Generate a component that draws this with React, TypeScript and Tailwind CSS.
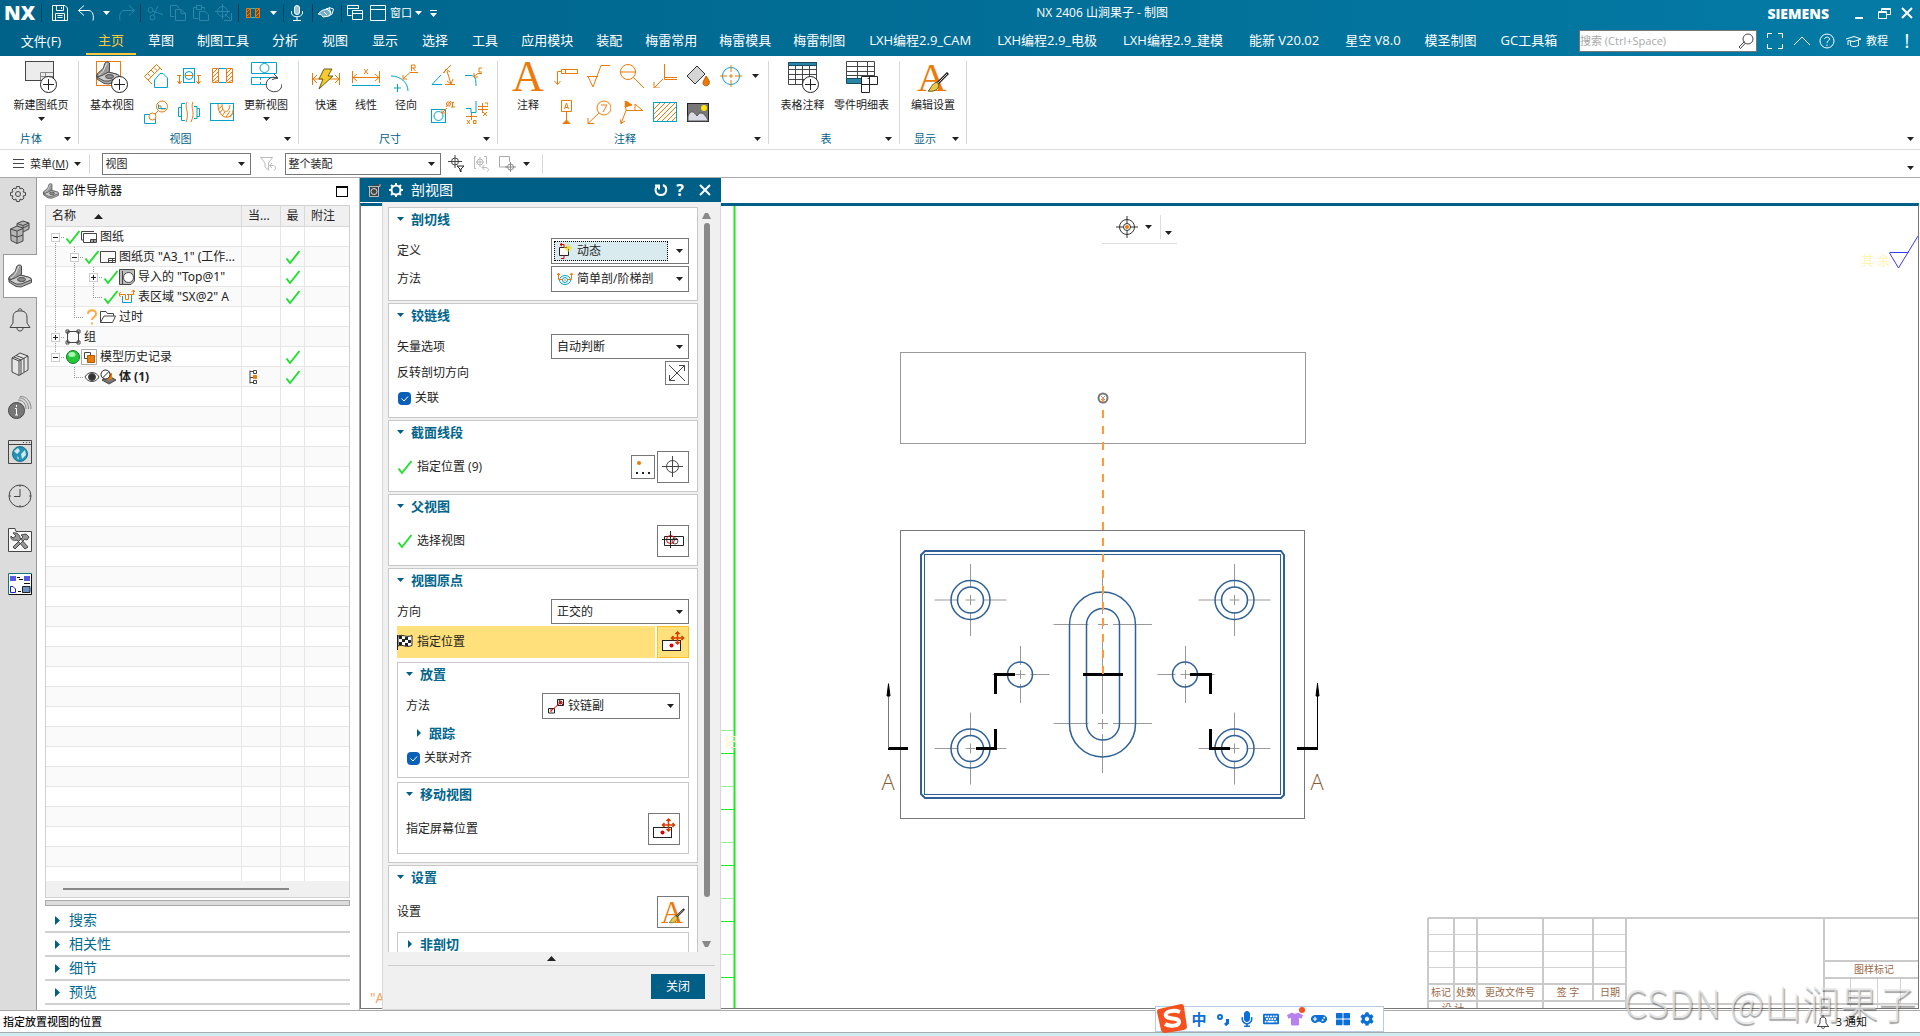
import type { ReactNode } from 'react'
import { FaCog, FaGamepad, FaKeyboard, FaMicrophone, FaThLarge, FaTshirt } from 'react-icons/fa'

const O = '#ec7a08'
const C = '#00a3cc'
const K = '#464646'

type IconProps = {
  size?: number
  color?: string
  width?: number
  children: ReactNode
}

function Icon({ size = 24, color = K, width = 1, children }: IconProps) {
  return (
    <svg
      width={size}
      height={size}
      viewBox={`0 0 ${size} ${size}`}
      fill="none"
      stroke={color}
      strokeWidth={width}
      className="shrink-0"
      aria-hidden="true"
    >
      {children}
    </svg>
  )
}

function Caret({ className = 'text-[#222]' }: { className?: string }) {
  return (
    <svg width="7" height="4" viewBox="0 0 7 4" className={`pointer-events-none shrink-0 ${className}`} aria-hidden="true">
      <path d="M0 0H7L3.5 4Z" fill="currentColor" />
    </svg>
  )
}

function PlusBadge() {
  return (
    <>
      <circle cx="23.5" cy="23.5" r="8" fill="#fff" stroke="#222" />
      <path d="M23.5 18V29M18 23.5H29" stroke="#222" />
    </>
  )
}

function BracketShape() {
  return (
    <g stroke="#4a4a4a" strokeLinejoin="round">
      <path d="M1 14L12 11L20 13C23 14 24 15 23.5 17V18.5L13 23L8 22.5L1 18Z" fill="#a9a9a9" />
      <path d="M1 14L12 11L20 13C23 14 24 15 23 16L13 20L8 20L1 16Z" fill="#cfcfcf" />
      <ellipse cx="13.5" cy="15.5" rx="4" ry="2" fill="#8c8c8c" />
      <path d="M1 15V13C3 11 6 9 7.5 7L8.5 3C9.5 .5 12.5 .5 13.5 2V10.5L6 14.5L1 16Z" fill="#9a9a9a" />
      <path d="M3 14C6 12 8.5 9 9 6L11 2" stroke="#e2e2e2" />
    </g>
  )
}

function SectionGlyph() {
  return (
    <>
      <path d="M.5 4.5H6.5V18.5H.5ZM14.5 4.5H20.5V18.5H14.5Z" stroke={O} />
      <path d="M1 9L5 5M1 13L6 8M1 17L6 12M3 18L6 16M15 9L19 5M15 13L20 8M15 17L20 12M17 18L20 16" stroke={O} />
      <path d="M7 4.5H14M7 18.5H14" stroke={C} />
    </>
  )
}

function LetterBrush() {
  return (
    <>
      <text x="0" y="30" fontSize="41" fill={O} stroke="none" className="font-['Liberation_Serif',serif]">
        A
      </text>
      <path d="M31 12L20 23" stroke="#222" strokeWidth="3" />
      <path d="M30 13L20 23" stroke="#ccc" strokeWidth="1" />
      <path d="M20 21L22 24C21 29 17 31 11 30C14 28 14 23 20 21Z" fill="#e8c84a" stroke="#6d5b16" />
    </>
  )
}

function CheckMark() {
  return (
    <Icon size={16} color="#22e032" width={2}>
      <path d="M1.5 9.5L5 14L14.5 2" />
    </Icon>
  )
}

/* title bar */

const Divider = () => <span className="h-[18px] w-px bg-[#003f5c]" />

function TitleBar() {
  return (
    <header className="flex h-[26px] items-center text-white">
      <strong className="w-[41px] pl-1 text-[20px] leading-6 font-extrabold">NX</strong>
      <Divider />
      <div className="flex items-center gap-2 pr-1 pl-[9px]">
        <button aria-label="保存">
          <Icon size={18} color="#fff">
            <path d="M1.5 1.5H14L16.5 4V16.5H1.5ZM5.5 1.5V6.5H12.5V1.5M4.5 16.5V9.5H13.5V16.5M6.5 11.5H11.5M6.5 13.5H11.5M10.5 3V5" />
          </Icon>
        </button>
        <button aria-label="撤消" className="flex items-center gap-2">
          <Icon size={18} color="#fff">
            <path d="M7 1.5L1.5 6.5L7 11.5M1.5 6.5H12C16 7 17 12 16 16.5" />
          </Icon>
          <Caret className="text-white" />
        </button>
        <button aria-label="重做">
          <Icon size={18} color="#2e86a8">
            <path d="M11 1.5L16.5 6.5L11 11.5M16.5 6.5H6C2 7 1 12 2 16.5" />
          </Icon>
        </button>
      </div>
      <Divider />
      <div className="flex items-center gap-[5px] px-[5px]">
        <button aria-label="剪切">
          <Icon size={18} color="#2e86a8">
            <circle cx="4.5" cy="6" r="2.5" />
            <circle cx="6.5" cy="13.5" r="2.5" />
            <path d="M6.5 7L17 10.5M7.5 11.5L12 2" />
          </Icon>
        </button>
        <button aria-label="复制">
          <Icon size={18} color="#2e86a8">
            <path d="M5.5 12.5H1.5V1.5H8L10.5 4.5M6.5 5.5H12L16.5 9.5V16.5H6.5ZM12 5.5V9.5H16.5" />
          </Icon>
        </button>
        <button aria-label="粘贴">
          <Icon size={18} color="#2e86a8">
            <path d="M6.5 14.5H1.5V3.5H4.5M9.5 3.5H12.5V5.5M4.5 1.5H9.5V5.5H4.5ZM7.5 7.5H13L16.5 10.5V16.5H7.5Z" />
          </Icon>
        </button>
        <button aria-label="粘贴特殊">
          <Icon size={18} color="#2e86a8">
            <circle cx="7.5" cy="7.5" r="5" />
            <path d="M7.5 0V15M0 7.5H15M9 16.5H16.5V9M10 10L15 15" />
          </Icon>
        </button>
      </div>
      <Divider />
      <button aria-label="剖视图" className="flex items-center gap-1.5 pr-1.5 pl-[3px]">
        <Icon size={22}>
          <path d="M4.5 6.5H8.5V15.5H4.5ZM13.5 6.5H17.5V15.5H13.5Z" stroke={O} fill="#7d4f1c" />
          <path d="M5 10L8 7M5 14L8 11M14 10L17 7M14 14L17 11" stroke={O} />
          <path d="M9 6.5H13M9 15.5H13" stroke="#19c3ee" />
        </Icon>
        <Caret className="text-white" />
      </button>
      <Divider />
      <button aria-label="语音" className="pr-1.5 pl-1">
        <Icon size={18} color="#fff">
          <rect x="6.5" y="1.5" width="5" height="9" rx="2.5" fill="#9bc5d6" />
          <path d="M3.5 7V9C4 14 14 14 14.5 9V7M9 13V16.5M5 16.5H13" />
        </Icon>
      </button>
      <Divider />
      <button aria-label="触控" className="pr-1.5 pl-1">
        <Icon size={18} color="#fff">
          <path d="M1 10L5 6.5L10 5L14 9L12 12L6 13L4 10.5ZM9 5L12 4L14 9" fill="#75aec4" />
          <path d="M12 3.5L16.5 5L15 10L12 12M7 8L10 11" />
        </Icon>
      </button>
      <Divider />
      <button aria-label="切换窗口" className="pl-1">
        <Icon size={18} color="#fff">
          <path d="M5.5 11.5H1.5V1.5H12.5V5M1.5 4.5H12.5M6.5 6.5H16.5V15.5H6.5ZM6.5 9.5H16.5" />
        </Icon>
      </button>
      <button className="flex items-center gap-[3px] pl-[5px] text-[11px] leading-4">
        <Icon size={18} color="#fff">
          <path d="M1.5 1.5H16.5V16.5H1.5ZM1.5 5.5H16.5" />
        </Icon>
        窗口
        <Caret className="text-white" />
      </button>
      <button aria-label="自定义快速访问" className="flex flex-col items-center gap-0.5 pl-2">
        <span className="h-px w-[7px] bg-white" />
        <Caret className="text-white" />
      </button>
      <h1 className="flex-1 text-center text-[12px] leading-4 font-normal">NX 2406 山涧果子 - 制图</h1>
      <strong className="pt-0.5 text-[14px] leading-4 font-extrabold">SIEMENS</strong>
      <div className="flex items-center gap-[7px] pr-1 pl-[22px]">
        <button aria-label="最小化">
          <Icon size={17} color="#fff" width={2}>
            <path d="M4 13H12" />
          </Icon>
        </button>
        <button aria-label="还原">
          <Icon size={17} color="#fff">
            <path d="M6.5 6V3.5H15.5V9.5H12M3.5 6.5H11.5V13.5H3.5ZM3.5 7.5H11.5M6.5 4.5H15.5" />
          </Icon>
        </button>
        <button aria-label="关闭窗口">
          <Icon size={17} color="#fff" width={2}>
            <path d="M3 3L13 13M13 3L3 13" />
          </Icon>
        </button>
      </div>
    </header>
  )
}

/* menu tabs */

const tabs = [
  '主页', '草图', '制图工具', '分析', '视图', '显示', '选择', '工具', '应用模块', '装配',
  '梅雷常用', '梅雷模具', '梅雷制图', 'LXH编程2.9_CAM', 'LXH编程2.9_电极', 'LXH编程2.9_建模',
  '能新 V20.02', '星空 V8.0', '模圣制图', 'GC工具箱',
]

function tabPadding(tab: string) {
  if (tab.length > 4) return 'px-[13px]'
  return tab.length === 4 ? 'px-[11px]' : 'px-3'
}

function MenuBar() {
  return (
    <nav className="flex h-[30px] items-center text-[13px] text-white">
      <button className="w-[86px] shrink-0 pr-1 leading-6">文件(F)</button>
      {tabs.map((tab, i) => (
        <button
          key={tab}
          className={`h-7 shrink-0 border-b-2 leading-6 whitespace-nowrap ${tabPadding(tab)} ${
            i === 0 ? 'border-[#ffc93c] text-[#ffc93c]' : 'border-transparent'
          }`}
        >
          {tab}
        </button>
      ))}
      <div className="ml-auto flex items-center gap-2 pr-[7px]">
        <label className="flex h-[22px] w-[178px] items-center border border-[#777] bg-white pr-px">
          <input
            type="text"
            aria-label="搜索"
            placeholder="搜索 (Ctrl+Space)"
            className="w-full min-w-0 text-[11px] text-[#333] outline-none placeholder:text-[#a8a8a8]"
          />
          <Icon size={18}>
            <circle cx="11" cy="7" r="5" />
            <path d="M7.5 9.5L2 15L3.5 16.5L8.5 11" />
          </Icon>
        </label>
        <button aria-label="全屏">
          <Icon size={20} color="#fff">
            <path d="M2.5 7V2.5H7M13 2.5H17.5V7M17.5 13V17.5H13M7 17.5H2.5V13" />
          </Icon>
        </button>
        <button aria-label="折叠功能区">
          <Icon size={18} color="#fff">
            <path d="M1 13L9 5L17 13" />
          </Icon>
        </button>
        <button aria-label="帮助">
          <Icon size={16} color="#fff">
            <circle cx="8" cy="8" r="7" />
            <path d="M5.5 6C6 3.5 10.5 3.5 10.5 6C10.5 8 8 7.5 8 10M8 11.5V13" />
          </Icon>
        </button>
        <button className="flex items-center gap-1 pl-0.5 text-[11px]">
          <Icon size={17} color="#fff">
            <path d="M1 6L9 3.5L16 6L9 8.5L3 7.5V12M5.5 8V12.5C8 14 11 14 13.5 12.5V7" />
          </Icon>
          教程
        </button>
        <span className="ml-[5px] w-3 text-center text-[20px] leading-6">!</span>
      </div>
    </nav>
  )
}

/* ribbon */

function BigButton({ label, caret, width = 'w-[66px]', children }: { label: string; caret?: boolean; width?: string; children: ReactNode }) {
  return (
    <button className={`flex h-[72px] shrink-0 flex-col items-center pt-[3px] text-[11px] leading-4 text-[#222] ${width}`}>
      <Icon size={32}>{children}</Icon>
      <span className="mt-1 whitespace-nowrap">{label}</span>
      {caret && (
        <span className="mt-1">
          <Caret />
        </span>
      )}
    </button>
  )
}

function SmallButton({ name, children }: { name: string; children: ReactNode }) {
  return (
    <button aria-label={name} className="flex h-9 w-[33px] items-center justify-center">
      <Icon size={24} color={O}>
        {children}
      </Icon>
    </button>
  )
}

function Group({ title, className = '', children }: { title: string; className?: string; children: ReactNode }) {
  return (
    <section className="my-[5px] flex shrink-0 flex-col border-r border-[#d8d8d8]">
      <div className={`-mt-[3px] flex h-[72px] ${className}`}>{children}</div>
      <div className="mt-px flex h-4 items-center pr-[5px]">
        <h2 className="flex-1 text-center text-[11px] leading-4 text-[#005f87]">{title}</h2>
        <button aria-label={`${title}选项`} className="px-0.5">
          <Caret />
        </button>
      </div>
    </section>
  )
}

function Ribbon() {
  return (
    <div className="flex h-[94px] border-b border-[#dcdcdc] bg-white">
      <Group title="片体" className="pr-1 pl-2">
        <BigButton label="新建图纸页" caret>
          <rect x=".5" y=".5" width="28" height="19" fill="#ececec" />
          <path d="M15.5 19V11.5H28M15.5 15.5H28M20.5 12V19" stroke="#888" />
          <PlusBadge />
        </BigButton>
      </Group>
      <Group title="视图" className="pr-1 pl-1.5">
        <BigButton label="基本视图" width="w-[54px]">
          <rect x=".5" y=".5" width="24" height="24" stroke={O} />
          <BracketShape />
          <PlusBadge />
        </BigButton>
        <div className="grid grid-cols-3">
          <SmallButton name="投影视图">
            <path d="M.5 12.5L12.5 .5L18 6M.5 12.5L8 20M4 16L16 4M3.5 9.5L6.5 12.5M7 6L10 9M10 3.5L13 6.5" />
            <path d="M10.5 23.5V16L16 9.5H19L23.5 14V23.5Z" stroke={C} />
          </SmallButton>
          <SmallButton name="剖切线">
            <rect x="6.5" y="4.5" width="11" height="14" stroke={C} />
            <circle cx="12" cy="11.5" r="4" stroke={C} />
            <path d="M0 11.5H4M8 11.5H16M20 11.5H24M2.5 11.5V20M.5 17L2.5 20L4.5 17M21.5 11.5V20M19.5 17L21.5 20L23.5 17" />
          </SmallButton>
          <SmallButton name="剖视图">
            <g transform="translate(2 0)">
              <SectionGlyph />
            </g>
          </SmallButton>
          <SmallButton name="局部放大图">
            <path d="M.5 14.5H11.5V23.5H.5Z" stroke={C} />
            <circle cx="8.5" cy="16.5" r="3.5" fill="#fff" />
            <circle cx="18" cy="6.5" r="5.5" />
            <path d="M11 14L14 11M14 6H17V9H21" />
            <path d="M14.5 4.5V8.5H22" stroke={C} />
          </SmallButton>
          <SmallButton name="断开视图">
            <path d="M8 3.5H4.5V20.5H8M4.5 7.5H1.5V16.5H4.5M17 6.5H20V18.5H17M20 8.5H22.5V16.5H20" stroke={C} />
            <path d="M10 2C7 8 13 12 9 22M16 2C13 8 19 12 14 22" />
          </SmallButton>
          <SmallButton name="局部剖视图">
            <rect x=".5" y="3.5" width="23" height="17" stroke={C} />
            <path d="M8 4C8 21 23 20 23 10M12 4C12 14 19 14 20 5M8.5 9L12 6M9.5 13L13 9M12 16L15 12M16 17L20 11M20 17L23 13" />
          </SmallButton>
        </div>
        <BigButton label="更新视图" caret width="w-[56px]">
          <path d="M1.5 1.5H26.5V12.5H1.5ZM26.5 15V16.5H1.5V23.5H17" stroke={C} />
          <circle cx="14.5" cy="7" r="4.5" stroke={C} />
          <path d="M10.5 16V24" stroke={C} strokeDasharray="3 2" />
          <path d="M24 13L28 17L22 18.5M28 17C20 14 14 20 17 27C21 33 32 32 32 23" />
        </BigButton>
      </Group>
      <Group title="尺寸" className="pr-[5px] pl-[7px]">
        <BigButton label="快速" width="w-10">
          <path d="M2.5 12V24M29.5 12V24M3 18H29M7 14L3 18L7 22M25 14L29 18L25 22" stroke={O} />
          <path d="M14 8H22L18 15H23L9 28L13 18H9Z" fill="#f6cc2c" stroke="#6b5b1c" />
        </BigButton>
        <BigButton label="线性" width="w-10">
          <path d="M2.5 10V22M29.5 10V22M3 16.5H29M7 13L3 16.5L7 20M25 13L29 16.5L25 20M14 8L18 13M18 8L14 13" stroke={O} />
          <path d="M2 24.5H30" stroke={C} />
        </BigButton>
        <BigButton label="径向" width="w-10">
          <path d="M1 15C10 15 18 21 18 30M4 27H11M7.5 23V31" stroke={C} />
          <path d="M28 11.5H20L13 18M13 14V18H17M21.5 10V4H25V7H21.5M23 7L25.5 10" stroke={O} />
        </BigButton>
        <div className="grid grid-cols-2">
          <SmallButton name="角度尺寸">
            <path d="M1 20.5H11M1 20.5L10 11" stroke={C} />
            <path d="M12 9L20 1M16 7L20 20M13 9L15 5L19 8M14 20.5H24M16 17L20 20L22 15" />
          </SmallButton>
          <SmallButton name="倒斜角尺寸">
            <path d="M1 11.5H7C11 12 12 14 12 22" stroke={C} />
            <path d="M18 9.5H14L9 13M10 9V13H14M18 4H15V8H18" />
          </SmallButton>
          <SmallButton name="厚度尺寸">
            <rect x=".5" y="9.5" width="14" height="13" stroke={C} />
            <circle cx="7.5" cy="16" r="4.5" stroke={C} />
            <path d="M11 13L16 8M11 9V13H15M15 7L20 1M20.5 2.5H23M21.5 2.5V7M20 7H24" />
            <circle cx="17.5" cy="4" r="2" />
          </SmallButton>
          <SmallButton name="坐标尺寸">
            <path d="M2 8.5H7V12.5H12V1" stroke={C} />
            <path d="M14 6.5H24M14 9.5H24M18.5 3V13M21 3H24V6M2 16.5H13M7.5 13V20M19 12L23 16M23 12L19 16M3 20L6 24M6 20L3 24M9.5 20.5H12V23.5H9.5Z" />
          </SmallButton>
        </div>
      </Group>
      <Group title="注释" className="pr-[5px] pl-[9px]">
        <BigButton label="注释" width="w-[42px]">
          <text x="0" y="30" fontSize="44" fill={O} stroke="none" className="font-['Liberation_Serif',serif]">
            A
          </text>
        </BigButton>
        <div className="grid grid-cols-6">
          <SmallButton name="特征控制框">
            <path d="M7.5 5.5H23.5V9.5H7.5ZM11.5 5.5V9.5M7 7.5H3.5V20M.5 17L3.5 20.5L6.5 17" />
          </SmallButton>
          <SmallButton name="表面粗糙度">
            <path d="M0 12.5H11M1 12.5L6 23L14 1.5H23" />
          </SmallButton>
          <SmallButton name="查找">
            <circle cx="8" cy="8" r="7.5" />
            <path d="M0 8H16M13 13L24 24" />
          </SmallButton>
          <SmallButton name="目标点符号">
            <path d="M11.5 0V15.5M11.5 13.5H24M11.5 15.5H24M10 15L1 24M1 18V24H7" />
          </SmallButton>
          <SmallButton name="区域填充">
            <path d="M1 12L11 2L19 10L9 20Z" fill="#d5d5d5" stroke="#333" />
            <path d="M20 12C23 16 24 18 23 20C21 23 17 22 17 19C17 17 19 15 20 12Z" fill={O} stroke="#b65d00" />
          </SmallButton>
          <SmallButton name="中心标记">
            <circle cx="12" cy="12" r="8.5" stroke={C} />
            <path d="M12 1V8M12 10V14M12 16V23M1 12H8M10 12H14M16 12H23" />
          </SmallButton>
          <SmallButton name="基准特征符号">
            <path d="M7.5 .5H17.5V11.5H7.5ZM12.5 12V20M10.5 9L12.5 3L14.5 9M11 7.5H14" />
            <path d="M9 23.5L12.5 20L16 23.5Z" fill={O} />
          </SmallButton>
          <SmallButton name="符号标注">
            <circle cx="17" cy="8" r="7" />
            <path d="M14 5H20L16 12M12 13L1 23.5M1 18V23.5H7" />
          </SmallButton>
          <SmallButton name="焊接符号">
            <path d="M6 1L12 5L5 7Z" fill={O} />
            <path d="M5 1L6 10.5L1 23.5M0 19L1 23.5L5 21M6 10.5H23M15 10V4L22 10" />
          </SmallButton>
          <SmallButton name="剖面线">
            <path d="M1 9L7 3M1 14L12 3M1 19L17 3M4 21L22 3M9 21L23 7M14 21L23 12M19 21L23 17" />
            <rect x=".5" y="2.5" width="23" height="19" stroke={C} />
          </SmallButton>
          <SmallButton name="图像">
            <rect x="1.5" y="3.5" width="21" height="18" fill="#777" stroke="#222" />
            <circle cx="18" cy="8" r="3" fill="#ffe600" stroke="none" />
            <path d="M2 21V16C5 9 8 12 11 16C14 11 18 12 22 20V21Z" fill="#d9dbe6" stroke="#555" />
          </SmallButton>
        </div>
        <button aria-label="更多注释" className="flex h-9 w-4 items-center justify-center">
          <Caret />
        </button>
      </Group>
      <Group title="表" className="pr-2 pl-1">
        <BigButton label="表格注释" width="w-[59px]">
          <path d="M1.5 1.5H29.5V23.5H1.5ZM1.5 8.5H29.5M1.5 13.5H29.5M1.5 18.5H29.5M8.5 4V23M15.5 4V23M22.5 4V23" />
          <path d="M1.5 1.5H29.5V4.5H1.5Z" fill="#2a86a8" stroke="#174c60" />
          <PlusBadge />
        </BigButton>
        <BigButton label="零件明细表" width="w-[59px]">
          <path d="M.5 .5H28.5V17.5H.5ZM.5 5.5H28M.5 10.5H28M.5 14.5H28M11.5 1V17M21.5 1V17" />
          <path d="M.5 17.5H16V22.5H.5Z" fill="#2a86a8" stroke="#174c60" />
          <path d="M15.5 15.5H31.5V23.5H23.5V31.5H15.5ZM15.5 23.5H23.5V15.5" fill="#fff" stroke="#222" />
        </BigButton>
      </Group>
      <Group title="显示">
        <BigButton label="编辑设置">
          <LetterBrush />
        </BigButton>
      </Group>
      <button aria-label="功能区选项" className="mt-auto mr-[6px] mb-2 ml-auto">
        <Caret />
      </button>
    </div>
  )
}

function FilterSelect({ name, value, width }: { name: string; value: string; width: string }) {
  return (
    <span className={`flex h-[22px] items-center border border-[#777] bg-white pr-[5px] ${width}`}>
      <select aria-label={name} className="min-w-0 flex-1 appearance-none pl-0.5 text-[11px] leading-4 outline-none">
        <option>{value}</option>
      </select>
      <Caret />
    </span>
  )
}

function SelectionBar() {
  return (
    <div className="flex h-7 items-center border-b border-[#aaa] bg-white pr-[6px] text-[11px] leading-4 text-[#222]">
      <button className="flex items-center gap-1.5 pr-2 pl-[13px] whitespace-nowrap">
        <Icon size={11}>
          <path d="M0 1.5H11M0 5.5H11M0 9.5H11" />
        </Icon>
        <span>
          菜单(<u>M</u>)
        </span>
        <Caret />
      </button>
      <span className="mr-3 h-5 w-px bg-[#d8d8d8]" />
      <FilterSelect name="类型过滤器" value="视图" width="w-[149px]" />
      <button aria-label="重置过滤器" className="mx-2">
        <Icon size={18} color="#bbb">
          <path d="M1.5 2.5H13.5L9.5 8V15L6 12V8ZM11 10.5H14.5C17 11 17 15 15 15.5M13 8L10.5 10.5L13 13" />
        </Icon>
      </button>
      <FilterSelect name="选择范围" value="整个装配" width="w-[156px]" />
      <div className="flex items-center gap-[7px] pl-[7px]">
        <button aria-label="捕捉过滤">
          <Icon size={18}>
            <circle cx="7" cy="6.5" r="3.5" />
            <path d="M7 0V13M0 6.5H14" />
            <path d="M9 11H16L13 14V17L12 16V14Z" fill="#fff" stroke="#222" />
          </Icon>
        </button>
        <button aria-label="恢复选择">
          <Icon size={18} color="#bbb">
            <circle cx="7" cy="7" r="3" />
            <path d="M3 1.5H1.5V13.5H3M7 2V12M3 7H11M11 1.5H13.5V9M9 12.5H13C16 13 16 16 14 16.5M11.5 10L9 12.5L11.5 15" />
          </Icon>
        </button>
        <button aria-label="选择框">
          <Icon size={18} color="#aaa">
            <path d="M10 12H1.5V1.5H11.5V7" />
            <circle cx="12.5" cy="12" r="3" stroke="#888" />
            <path d="M12.5 7V17M7 12H18" stroke="#888" />
          </Icon>
        </button>
        <Caret />
      </div>
      <span className="ml-3 h-5 w-px bg-[#d8d8d8]" />
      <button aria-label="选择条选项" className="ml-auto pt-2">
        <Caret />
      </button>
    </div>
  )
}

/* resource bar */

const railItems: { name: string; art: ReactNode }[] = [
  {
    name: '装配导航器',
    art: (
      <g strokeLinejoin="round">
        <path d="M2.5 9L9 6V3.5L15 1L21 3V9L15 12V21L9 23.5L3 20.5Z" fill="#b5b5b5" />
        <path d="M2.5 9L9 11L15 8.5V12M9 11V23.5M3 15L9 17L15 15M9 6L15 8L21 5M9 3.5L15 5.5L21 3M15 5.5V8.5" />
      </g>
    ),
  },
  { name: '部件导航器', art: <BracketShape /> },
  {
    name: '通知',
    art: <path d="M2 19.5H22M2 19.5L5 15V10C5 4 8 3 12 3C16 3 19 4 19 10V15L22 19.5M10 3C10 0 14 0 14 3M9 20C9 24 15 24 15 20" />,
  },
  {
    name: '重用库',
    art: <path d="M4 6L12 1L20 4V18L11 23.5L4 20ZM4 6L11 9V23M11 9L20 4M8 3.5L16 6.5V20M6 5L13 8V22" fill="#e6e6e6" />,
  },
  {
    name: 'HD3D 工具',
    art: (
      <>
        <path d="M10 4C16 4 18 9 18 13M11 2C18 2 20.5 8 20.5 13M12 .5C19 0 23 6 23 13" stroke="#888" />
        <circle cx="8.5" cy="14.5" r="8" fill="#777" />
        <path d="M8.5 9V11M7 12.5H8.5V19M7 19H10" stroke="#fff" />
      </>
    ),
  },
  {
    name: 'Web 浏览器',
    art: (
      <>
        <path d="M.5 .5H23.5V23.5H.5ZM.5 4.5H23.5M15 2.5H16M18 2.5H19M21 2.5H22" />
        <circle cx="12" cy="14" r="7.5" fill="#2592b4" stroke="#1b6f8c" />
        <path d="M6 11L10 8L12 11L9 14ZM13 14L17 10L18 15L14 19ZM9 16L11 18L10 20Z" fill="#cfeaf2" stroke="none" />
      </>
    ),
  },
  {
    name: '历史记录',
    art: (
      <>
        <circle cx="12" cy="12" r="11" />
        <path d="M12 5V12.5H6M12 1V3M12 21V23M1 12H3M21 12H23" />
      </>
    ),
  },
  {
    name: '加工向导',
    art: (
      <>
        <path d="M.5 23.5V.5H7L8 3.5H23.5V23.5Z" fill="#f7f7f7" />
        <path d="M5 5L8 8L5 10L3 8C2 12 6 13 9 12L17 21L20 19L12 10C12 7 9 4 5 5ZM5 19L15 9L13 7L18 6L21 9L19 12L17 11L7 21Z" fill="#999" />
      </>
    ),
  },
  {
    name: '系统场景',
    art: (
      <>
        <path d="M.5 1.5H23.5V22.5H.5Z" fill="#fff" stroke="#0b7a7a" />
        <path d="M23.5 2V22.5H1" stroke="#111" />
        <path d="M2 4H8V9H2ZM16 4H22V9H16Z" fill="#5a5ae8" stroke="none" />
        <path d="M9 5.5H12M11 7.5H15M16 11.5H22M10 19.5H13" stroke="#111" />
        <path d="M2.5 14.5H5L7.5 17V20.5H2.5Z" stroke="#2020d0" />
        <path d="M14.5 14.5H22V20.5H14.5Z" fill="#6f93c4" stroke="#222" />
      </>
    ),
  },
]

function ResourceBar() {
  return (
    <nav className="flex w-[37px] shrink-0 flex-col border-r border-[#999] bg-[#dcdcdc]">
      <button aria-label="资源条选项" className="flex h-8 items-center justify-center">
        <Icon size={18}>
          <circle cx="9" cy="9" r="2.5" />
          <path d="M7.5 1.5H10.5L11 4L13 3L15 5L14 7L16.5 7.5V10.5L14 11L15 13L13 15L11 14L10.5 16.5H7.5L7 14L5 15L3 13L4 11L1.5 10.5V7.5L4 7L3 5L5 3L7 4Z" />
        </Icon>
      </button>
      {railItems.map((item, i) => (
        <button
          key={item.name}
          aria-label={item.name}
          className={`flex h-11 items-center pl-1 ${
            i === 1 ? '-mr-px ml-[3px] border border-r-0 border-[#999] bg-white' : 'ml-1'
          }`}
        >
          <Icon size={24}>{item.art}</Icon>
        </button>
      ))}
    </nav>
  )
}

/* part navigator */

// guide codes: u = line up, d = line down, r = line right, + / - = toggle box
function Guide({ code }: { code: string }) {
  const box = code.includes('+') || code.includes('-')
  return (
    <svg width="19" height="20" viewBox="0 0 19 20" fill="none" className="shrink-0" aria-hidden="true">
      <g stroke="#999" strokeDasharray="1 1">
        {code.includes('u') && <path d="M9.5 0V10" />}
        {code.includes('d') && <path d="M9.5 10V20" />}
        {code.includes('r') && <path d="M9 10.5H19" />}
      </g>
      {box && <rect x="5.5" y="6.5" width="8" height="8" fill="#fff" stroke="#ccc" />}
      {box && <path d="M7 10.5H12" stroke="#222" />}
      {code.includes('+') && <path d="M9.5 8V13" stroke="#222" />}
    </svg>
  )
}

type TreeRow = {
  guides: string[]
  status?: 'check' | 'question' | 'ball' | 'eye'
  art: ReactNode
  label: string
  bold?: boolean
  current?: boolean
  latest?: boolean
}

const treeRows: TreeRow[] = [
  {
    guides: ['dr-'],
    status: 'check',
    art: <path d="M2 11H.5V2.5H13M2.5 4.5H15.5V13.5H2.5ZM9.5 13V10.5H15M9.5 12H15M12.5 10V13" />,
    label: '图纸',
  },
  {
    guides: ['ud', 'udr-'],
    status: 'check',
    art: <path d="M.5 2.5H15.5V13.5H.5ZM8.5 13V9.5H15M8.5 11.5H15M12.5 9V13" />,
    label: '图纸页 "A3_1" (工作...',
    latest: true,
  },
  {
    guides: ['ud', 'ud', 'udr+'],
    status: 'check',
    art: (
      <>
        <path d="M.5 .5H15.5V12L12 15.5H.5Z" fill="#bdbdbd" />
        <circle cx="9.5" cy="8.5" r="5" fill="#fff" />
        <path d="M3.5 2V15" />
      </>
    ),
    label: '导入的 "Top@1"',
    latest: true,
  },
  {
    guides: ['ud', 'ud', 'ur'],
    status: 'check',
    art: (
      <>
        <path d="M3.5 7V13.5H12.5V5.5H8" stroke={C} />
        <path d="M0 5.5H6.5V10.5H9.5V5.5H14.5V1M12.5 3L14.5 1L16 3M1.5 3L0 5.5L1.5 8" stroke={O} />
      </>
    ),
    label: '表区域 "SX@2" A',
    latest: true,
  },
  {
    guides: ['ud', 'ur'],
    status: 'question',
    art: <path d="M.5 13.5V2.5H6L7.5 4.5H13.5V7M.5 13.5L4 7H15.5L12.5 13.5Z" />,
    label: '过时',
  },
  {
    guides: ['udr+'],
    art: <path d="M2.5 2.5H13.5V13.5H2.5ZM1 1H4V4H1ZM12 1H15V4H12ZM1 12H4V15H1ZM12 12H15V15H12Z" />,
    label: '组',
  },
  {
    guides: ['ur-'],
    status: 'ball',
    art: (
      <>
        <path d="M.5 .5H15.5V15.5H.5Z" stroke="#aaa" />
        <path d="M3.5 3.5H9.5V9.5H3.5Z" />
        <path d="M6.5 6.5H13.5V13.5H6.5Z" fill={O} stroke="#b65d00" />
      </>
    ),
    label: '模型历史记录',
    latest: true,
  },
  {
    guides: ['', 'ur'],
    status: 'eye',
    art: (
      <>
        <path d="M2 11L9 7L16 11L9 15Z" fill="#777" />
        <path d="M6 5L12 4V10L7 11Z" fill={O} stroke="none" />
        <circle cx="5.5" cy="5.5" r="4.5" fill="#fff" stroke="#222" />
        <path d="M2.5 9L9 2.5" stroke="#222" />
      </>
    ),
    label: '体 (1)',
    bold: true,
    current: true,
    latest: true,
  },
]

function StatusMark({ status }: { status: TreeRow['status'] }) {
  if (status === 'check') return <CheckMark />
  if (status === 'question')
    return (
      <Icon size={16} color="#ffa940" width={2}>
        <path d="M4 5C4 0 12 0 12 5C12 8 8 8 8 11M8 13.5V15.5" />
      </Icon>
    )
  if (status === 'ball')
    return (
      <Icon size={16}>
        <circle cx="8" cy="8" r="6.5" fill="#23c93a" stroke="#1d7a2a" />
        <ellipse cx="7" cy="5.5" rx="3.5" ry="2.5" fill="#a8f5b0" stroke="none" />
      </Icon>
    )
  if (status === 'eye')
    return (
      <Icon size={16}>
        <path d="M1 8C4 2 12 2 15 8C12 14 4 14 1 8Z" fill="#fff" />
        <circle cx="8" cy="8" r="3.5" fill="#333" />
      </Icon>
    )
  return null
}

const emptyRows = Array.from({ length: 25 }, (_, i) => i)

function PartNavigator() {
  const cell = 'h-5 border-r border-b border-[#e6e6e6] p-0'
  return (
    <aside className="flex w-[323px] shrink-0 flex-col border-r border-[#aaa] bg-white pr-[9px] pl-2">
      <div className="-ml-0.5 flex h-[26px] shrink-0 items-center gap-[3px] text-[12px]">
        <svg width="16" height="16" viewBox="0 0 24 24" fill="none" aria-hidden="true">
          <BracketShape />
        </svg>
        <h2 className="flex-1 text-[12px] leading-4">部件导航器</h2>
        <button aria-label="最大化" className="mr-0.5 h-[11px] w-3 border border-t-2 border-black" />
      </div>
      <div className="mt-px flex min-h-0 flex-1 flex-col border border-[#d0d0d0]">
        <div className="min-h-0 flex-1 overflow-hidden">
          <table className="w-full table-fixed border-separate border-spacing-0 font-['Noto_Sans','Noto_Sans_CJK_SC',sans-serif] text-[12px] leading-4 text-[#222]">
            <colgroup>
              <col className="w-[196px]" />
              <col className="w-[39px]" />
              <col className="w-6" />
              <col />
            </colgroup>
            <thead>
              <tr className="bg-[#f0f0f0] text-left">
                <th className="h-[21px] border-r border-b border-[#d8d8d8] p-0 pl-1.5 font-normal">
                  <span className="flex items-center gap-[18px]">
                    名称
                    <svg width="9" height="5" viewBox="0 0 9 5" aria-hidden="true">
                      <path d="M0 5L4.5 0L9 5Z" fill="#222" />
                    </svg>
                  </span>
                </th>
                <th className="border-r border-b border-[#d8d8d8] p-0 pl-1.5 font-normal">当...</th>
                <th className="border-r border-b border-[#d8d8d8] p-0 text-center font-normal">最</th>
                <th className="border-b border-[#d8d8d8] p-0 pl-1.5 font-normal">附注</th>
              </tr>
            </thead>
            <tbody>
              {treeRows.map((row) => (
                <tr key={row.label} className="even:bg-[#fafafa]">
                  <td className={cell}>
                    <span className={`flex h-[19px] items-center overflow-hidden whitespace-nowrap ${row.bold ? 'font-bold' : ''}`}>
                      {row.guides.map((code, i) => (
                        <Guide key={i} code={code} />
                      ))}
                      <StatusMark status={row.status} />
                      <Icon size={16}>{row.art}</Icon>
                      <span className="ml-[3px]">{row.label}</span>
                    </span>
                  </td>
                  <td className={cell}>
                    {row.current && (
                      <span className="flex pl-1">
                        <Icon size={16}>
                          <path d="M4 1.5V14.5M4 2.5H7M4 8.5H7M4 13.5H7M7.5 1.5H10.5V4.5H7.5ZM7.5 11.5H10.5V14.5H7.5Z" />
                          <path d="M7.5 6.5H10.5V9.5H7.5Z" fill={O} stroke={O} />
                        </Icon>
                      </span>
                    )}
                  </td>
                  <td className={cell}>
                    {row.latest && (
                      <span className="flex justify-center">
                        <CheckMark />
                      </span>
                    )}
                  </td>
                  <td className="border-b border-[#e6e6e6]" />
                </tr>
              ))}
              {emptyRows.map((n) => (
                <tr key={n} className="even:bg-[#fafafa]">
                  <td className={cell} />
                  <td className={cell} />
                  <td className={cell} />
                  <td className="border-b border-[#e6e6e6]" />
                </tr>
              ))}
            </tbody>
          </table>
        </div>
        <div className="flex h-4 shrink-0 items-center bg-[#f0f0f0] pl-[17px]">
          <span className="h-0.5 w-[226px] bg-[#888]" />
        </div>
      </div>
      <div className="mt-0.5 h-1.5 shrink-0 border border-[#aaa] bg-[#dcdcdc]" />
      <div className="shrink-0 pt-[3px] pb-[5px]">
        {['搜索', '相关性', '细节', '预览'].map((name) => (
          <button
            key={name}
            className="flex h-6 w-full items-center gap-[9px] border-b-2 border-[#d0d0d0] pl-2.5 text-[14px] leading-5 text-[#006a90]"
          >
            <svg width="5" height="9" viewBox="0 0 5 9" aria-hidden="true">
              <path d="M0 0L5 4.5L0 9Z" fill="#005f87" />
            </svg>
            {name}
          </button>
        ))}
      </div>
    </aside>
  )
}

/* section view dialog */

function Heading({ title, open = true, indent = false }: { title: string; open?: boolean; indent?: boolean }) {
  return (
    <button
      className={`flex items-center text-[13px] leading-5 font-bold text-[#00658c] ${
        indent ? 'h-6 pl-[9px]' : 'h-[26px] w-full pb-1 pl-2'
      }`}
    >
      <svg width="8" height="8" viewBox="0 0 8 8" className="mr-[6px]" aria-hidden="true">
        <path d={open ? 'M0 2H7L3.5 6Z' : 'M2 0L6 4L2 8Z'} fill="#005f87" />
      </svg>
      {title}
    </button>
  )
}

function Panel({ title, open = true, className = '', children }: { title: string; open?: boolean; className?: string; children?: ReactNode }) {
  return (
    <section className={`border border-[#c8c8c8] bg-white ${className}`}>
      <Heading title={title} open={open} />
      {open && <div className="flex flex-col gap-0.5 px-2 pt-1 pb-2">{children}</div>}
    </section>
  )
}

function Combo({ id, label, value, art, focused }: { id: string; label: string; value: string; art?: ReactNode; focused?: boolean }) {
  return (
    <div className="flex items-center justify-between">
      <label htmlFor={id}>{label}</label>
      <span className={`flex w-[138px] items-center border border-[#777] bg-white pr-[5px] ${art ? 'h-[26px]' : 'h-[25px]'}`}>
        <span
          className={`mr-2 ml-0.5 flex h-5 min-w-0 flex-1 items-center gap-1 border border-dotted pl-0.5 ${
            focused ? 'border-black bg-[#d9ebef]' : 'border-transparent'
          }`}
        >
          {art && <Icon size={16}>{art}</Icon>}
          <select id={id} className="min-w-0 flex-1 appearance-none leading-4 outline-none">
            <option>{value}</option>
          </select>
        </span>
        <Caret />
      </span>
    </div>
  )
}

function ToolButton({ name, small, active, children }: { name: string; small?: boolean; active?: boolean; children: ReactNode }) {
  return (
    <button
      aria-label={name}
      className={`flex items-center justify-center border ${small ? 'size-6' : 'size-8'} ${
        active ? 'border-[#ffc020] bg-[#ffe07a]' : 'border-[#777] bg-white'
      }`}
    >
      {children}
    </button>
  )
}

function CheckField({ label }: { label: string }) {
  return (
    <label className="flex h-[22px] items-center gap-1 pl-px">
      <span className="grid">
        <input type="checkbox" defaultChecked className="col-start-1 row-start-1 size-[13px] appearance-none rounded-sm bg-[#0a5fb8]" />
        <svg viewBox="0 0 13 13" fill="none" className="pointer-events-none col-start-1 row-start-1 size-[13px]" aria-hidden="true">
          <path d="M3.5 6.5L6 9L10 4.5" stroke="#fff" />
        </svg>
      </span>
      {label}
    </label>
  )
}

const MoveGlyph = () => (
  <Icon size={24}>
    <rect x="1.5" y="10.5" width="18" height="10" fill="#fff" stroke="#222" />
    <circle cx="10.5" cy="15.5" r="2" fill="#d00" stroke="none" />
    <path
      d="M16.5 2V14M10.5 8H22.5M14.5 4L16.5 2L18.5 4M14.5 12L16.5 14L18.5 12M12.5 6L10.5 8L12.5 10M20.5 6L22.5 8L20.5 10"
      stroke="#d83a00"
      strokeWidth="1.5"
    />
  </Icon>
)

function SectionDialog() {
  return (
    <div className="flex h-full min-h-0 flex-col">
      <div className="flex h-6 shrink-0 items-center bg-[#005f87] pr-[9px] pl-[7px] text-white">
        <Icon size={15} color="#ddd">
          <path d="M1 3.5H13V1M2.5 4V13.5H11.5V4" stroke="#bbb" fill="#444" />
          <circle cx="7" cy="8.5" r="3" />
        </Icon>
        <span className="ml-[6px]">
          <Icon size={16} color="#fff" width={2}>
            <circle cx="8" cy="8" r="4.5" />
            <path d="M8 1V3M8 13V15M1 8H3M13 8H15M3 3L4.5 4.5M13 3L11.5 4.5M3 13L4.5 11.5M13 13L11.5 11.5" />
          </Icon>
        </span>
        <h2 className="ml-[7px] flex-1 text-[14px] leading-5 font-normal">剖视图</h2>
        <div className="flex items-center gap-[7px]">
          <button aria-label="重置">
            <Icon size={14} color="#fff" width={2}>
              <path d="M9 2C14 4 13 12 7 12C1 12 0 5 4 3M1 2.5H5V6.5" />
            </Icon>
          </button>
          <button aria-label="帮助" className="w-[10px] text-[16px] leading-5 font-bold">
            ?
          </button>
          <button aria-label="关闭对话框" className="ml-1.5">
            <Icon size={14} color="#fff" width={2}>
              <path d="M2 2L12 12M12 2L2 12" />
            </Icon>
          </button>
        </div>
      </div>
      <div className="ml-[22px] flex min-h-0 flex-1 flex-col border border-t-0 border-[#d8d8d8] bg-[#f0f0f0] text-[12px] leading-4 text-[#222]">
        <div className="flex min-h-0 flex-1 pt-[5px] pl-[5px]">
          <div className="flex min-h-0 w-[310px] flex-col gap-0.5 overflow-hidden *:shrink-0">
            <Panel title="剖切线">
              <Combo
                id="define"
                label="定义"
                value="动态"
                focused
                art={
                  <>
                    <path d="M2.5 4.5H11.5V12.5H2.5Z" stroke="#222" fill="#fff" />
                    <path d="M3 1.5H7V5M7 12V15.5H4M5 0L3 1.5L5 3" stroke="#d00" />
                    <path d="M11 1V9M7 5H15M8.5 2.5L13.5 7.5M13.5 2.5L8.5 7.5" stroke="#f0d800" />
                  </>
                }
              />
              <Combo
                id="method"
                label="方法"
                value="简单剖/阶梯剖"
                art={
                  <>
                    <ellipse cx="8" cy="9" rx="5.5" ry="4.5" stroke={C} />
                    <circle cx="8" cy="9" r="2.5" stroke={C} />
                    <path d="M1.5 2V8.5H5M7 9H9M11 8.5H14.5V2M0 4L1.5 2L3 4M13 4L14.5 2L16 4" stroke={O} />
                  </>
                }
              />
            </Panel>
            <Panel title="铰链线">
              <Combo id="vector" label="矢量选项" value="自动判断" />
              <div className="flex items-center justify-between">
                <span>反转剖切方向</span>
                <ToolButton name="反转剖切方向" small>
                  <Icon size={18}>
                    <path d="M1 17L17 1M11 1.5H16.5V7M1.5 11V16.5H7M1 1L17 17" />
                  </Icon>
                </ToolButton>
              </div>
              <CheckField label="关联" />
            </Panel>
            <Panel title="截面线段">
              <div className="flex items-center gap-0.5">
                <CheckMark />
                <span className="ml-0.5 flex-1">指定位置 (9)</span>
                <ToolButton name="点对话框" small>
                  <Icon size={18}>
                    <circle cx="5" cy="5" r="2" fill={O} stroke="none" />
                    <path d="M2 15H4M8 15H10M14 15H16" stroke="#222" strokeWidth="2" />
                  </Icon>
                </ToolButton>
                <ToolButton name="指定位置">
                  <Icon size={22}>
                    <circle cx="10.5" cy="10.5" r="6" />
                    <path d="M10.5 0V21M0 10.5H21" />
                  </Icon>
                </ToolButton>
              </div>
            </Panel>
            <Panel title="父视图">
              <div className="flex items-center gap-0.5">
                <CheckMark />
                <span className="ml-0.5 flex-1">选择视图</span>
                <ToolButton name="选择视图">
                  <Icon size={22}>
                    <path d="M2.5 6.5H21.5V15.5H2.5Z" stroke="#222" />
                    <circle cx="13" cy="11" r="3" />
                    <circle cx="8.5" cy="9.5" r="4" stroke="#d00" />
                    <path d="M8.5 1V18M0 9.5H16" stroke="#222" />
                  </Icon>
                </ToolButton>
              </div>
            </Panel>
            <Panel title="视图原点">
              <Combo id="direction" label="方向" value="正交的" />
              <div className="flex gap-0.5">
                <div className="flex h-8 flex-1 items-center gap-1 bg-[#ffe07a]">
                  <Icon size={16}>
                    <path d="M.5 1V16M1 2C6 0 9 4 15 1.5V11.5C9 14 6 10 1 12Z" fill="#fff" stroke="#222" />
                    <path d="M2 2H5V5H2ZM8 3H11V6H8ZM5 5H8V8H5ZM11 6H14V9H11ZM2 8H5V11H2ZM8 9H11V12H8Z" fill="#222" stroke="none" />
                  </Icon>
                  指定位置
                </div>
                <ToolButton name="指定放置位置" active>
                  <MoveGlyph />
                </ToolButton>
              </div>
              <Panel title="放置" className="mt-0.5">
                <Combo
                  id="placement"
                  label="方法"
                  value="铰链副"
                  art={
                    <>
                      <path d="M.5 10.5H6.5V15H.5ZM9.5 1.5H15.5V7.5H9.5Z" stroke="#222" />
                      <path d="M3 13L13 4M3 11V14" stroke="#d00" />
                      <path d="M10 1L15 7" stroke="#222" />
                      <circle cx="12.5" cy="4.5" r="2" fill="#a22" stroke="none" />
                    </>
                  }
                />
                <Heading title="跟踪" open={false} indent />
                <CheckField label="关联对齐" />
              </Panel>
              <Panel title="移动视图" className="mt-0.5">
                <div className="flex items-center justify-between">
                  <span>指定屏幕位置</span>
                  <ToolButton name="指定屏幕位置">
                    <MoveGlyph />
                  </ToolButton>
                </div>
              </Panel>
            </Panel>
            <Panel title="设置">
              <div className="flex items-center justify-between">
                <span>设置</span>
                <ToolButton name="设置">
                  <svg width="24" height="24" viewBox="0 0 32 32" fill="none" aria-hidden="true">
                    <LetterBrush />
                  </svg>
                </ToolButton>
              </div>
              <Panel title="非剖切" open={false} className="mt-0.5" />
            </Panel>
          </div>
          <div className="flex w-[17px] flex-col items-center pt-1.5 pb-[5px]">
            <svg width="9" height="6" viewBox="0 0 9 6" aria-hidden="true">
              <path d="M0 6L3 0H6L9 6Z" fill="#888" />
            </svg>
            <span className="mt-1 mb-11 w-1.5 flex-1 rounded-full bg-[#888]" />
            <svg width="9" height="6" viewBox="0 0 9 6" aria-hidden="true">
              <path d="M0 0H9L6 6H3Z" fill="#888" />
            </svg>
          </div>
        </div>
        <button aria-label="折叠对话框" className="mx-[5px] flex h-[14px] shrink-0 items-center justify-center border-b border-[#ccc]">
          <svg width="9" height="5" viewBox="0 0 9 5" aria-hidden="true">
            <path d="M0 5L4.5 0L9 5Z" fill="#222" />
          </svg>
        </button>
        <div className="flex shrink-0 justify-end px-[15px] pt-2 pb-2.5">
          <button className="h-[25px] w-[54px] bg-[#005f87] text-white">关闭</button>
        </div>
      </div>
    </div>
  )
}

/* drawing sheet */

const cornerHoles = [
  [970.5, 600],
  [1234.5, 600],
  [970.5, 748.5],
  [1234.5, 748.5],
]

const rowTicks = [730, 753, 786, 809, 842, 865, 898, 921, 954, 977]

const blockCells: [number, number, string][] = [
  [1441, 996, '标记'],
  [1466, 996, '处数'],
  [1510, 996, '更改文件号'],
  [1568, 996, '签 字'],
  [1610, 996, '日期'],
  [1453, 1012, '设 计'],
  [1874, 973, '图样标记'],
]

function Sheet() {
  return (
    <svg className="size-full" fill="none" role="img" aria-label="图纸页 A3_1">
      <g transform="translate(-361 -206)">
        <path d="M734.5 206V1008" stroke="#22e822" strokeWidth="2" />
        {rowTicks.map((y, i) => (
          <path key={y} d={`M720 ${y + 0.5}H734`} stroke={i % 2 ? '#22e822' : '#8df28d'} />
        ))}
        <text x="724" y="746" fontSize="13" fill="#fff3c4">记</text>
        <text x="370" y="1003" fontSize="14" fill="#f0a060">"A3</text>

        <text x="1861" y="265" fontSize="13" fill="#fff3b0" className="font-['Liberation_Serif','Noto_Sans_CJK_SC',serif]">
          其 余
        </text>
        <path d="M1889.5 252.5H1908.5M1889.5 253L1898.5 268L1918 236" stroke="#3a3aee" />

        {/* section view preview */}
        <rect x="900.5" y="352.5" width="405" height="91" stroke="#999" />

        {/* parent view */}
        <rect x="900.5" y="530.5" width="404" height="288" stroke="#777" />
        <g stroke="#999">
          {cornerHoles.map(([x, y]) => (
            <path
              key={`${x}-${y}`}
              d={`M${x - 36} ${y}H${x - 12}M${x - 5} ${y}H${x + 5}M${x + 12} ${y}H${x + 36}M${x} ${y - 36}V${y - 12}M${x} ${y - 5}V${y + 5}M${x} ${y + 12}V${y + 36}`}
            />
          ))}
          {[1020.5, 1185.5].map((x) => (
            <path
              key={x}
              d={`M${x - 28} 674.5H${x - 10}M${x - 5} 674.5H${x + 5}M${x + 10} 674.5H${x + 29}M${x} 646V665M${x} 670V679M${x} 684V703`}
            />
          ))}
          <path d="M1053.5 624.5H1088.5M1098 624.5H1108M1113 624.5H1152M1053.5 723.5H1088.5M1098 723.5H1108M1113 723.5H1152M1102.5 578V614M1102.5 619V629M1102.5 634V714M1102.5 719V729M1102.5 734V773" />
        </g>
        <g stroke="#2f6096" strokeWidth="2">
          <path d="M925 551H1281L1284 555V795L1281 798H925L921 794V555Z" />
          <rect x="924.5" y="554.5" width="356" height="240" strokeWidth="1" />
          <g strokeWidth="1.5">
            {cornerHoles.map(([x, y]) => (
              <g key={`${x}-${y}`}>
                <circle cx={x} cy={y} r="19.5" />
                <circle cx={x} cy={y} r="13" />
              </g>
            ))}
            <circle cx="1020" cy="674.5" r="12.5" />
            <circle cx="1185" cy="674.5" r="12.5" />
            <rect x="1069.5" y="592" width="66" height="165" rx="33" />
            <rect x="1086.5" y="608.5" width="33" height="131.5" rx="16.5" />
          </g>
        </g>
        <path
          d="M1083 674.5H1123M1015 674.5H995.5V694M995.5 729V748.5H976M1190 674.5H1210.5V694M1210.5 729V748.5H1230M888 748.5H908M1297 748.5H1318"
          stroke="#000"
          strokeWidth="3"
        />
        <path d="M888.5 683V748" stroke="#777" />
        <path d="M1317.5 683V748" stroke="#000" />
        <path d="M888.5 684L890 696H887ZM1317.5 684L1319 696H1316Z" fill="#000" stroke="#000" />
        <path d="M1103 410V674" stroke="#ff9a3c" strokeWidth="2" strokeDasharray="8 8" />
        <circle cx="1103" cy="398" r="4.5" stroke="#777" strokeWidth="2" />
        <path d="M1101 396L1105 400M1105 396L1101 400" stroke="#999" />
        <path d="M1103 398V402" stroke="#ff9a3c" strokeWidth="2" />
        <g fontSize="22" fill="#8a5a34" textAnchor="middle" className="font-['Open_Sans',sans-serif] font-light">
          <text x="888" y="790">A</text>
          <text x="1317" y="790">A</text>
        </g>

        {/* title block */}
        <path
          d="M1428 934.5H1626M1428 951.5H1626M1428 967.5H1626M1850.5 978V1008M1877.5 978V1008M1900.5 978V1008"
          stroke="#d2d2d2"
        />
        <path
          d="M1428 918H1918M1428 984H1626M1428 1001H1626M1428 918V1008M1454 918V1001M1477 918V1008M1543 918V1008M1593 918V1001M1626 918V1008M1824 918V1008M1824 961H1918M1824 978H1918M1626 1004H1918"
          stroke="#cacaca"
          strokeWidth="2"
        />
        <g fontSize="10" fill="#996a48" textAnchor="middle">
          {blockCells.map(([x, y, label]) => (
            <text key={label} x={x} y={y}>
              {label}
            </text>
          ))}
        </g>
      </g>
    </svg>
  )
}

function Workspace() {
  return (
    <main className="grid min-w-0 flex-1 grid-cols-1 grid-rows-1">
      <div className="col-start-1 row-start-1 flex min-h-0 flex-col bg-white pt-[25px] pr-px pb-px">
        <div className="relative min-h-0 flex-1 overflow-hidden border border-t-3 border-[#777] border-t-[#005f87]">
          <Sheet />
          <div className="absolute top-1 left-[741px] flex h-[34px] w-[75px] items-center border-b border-[#ddd] pl-3.5">
            <button aria-label="捕捉点" className="flex items-center gap-[7px]">
              <Icon size={22}>
                <circle cx="11" cy="11" r="7.5" stroke="#333" />
                <path d="M11 0V22M0 11H22" stroke="#333" />
                <circle cx="11" cy="11" r="3.5" fill="#fff" stroke="#333" />
                <circle cx="11" cy="11" r="2" fill={O} stroke="none" />
              </Icon>
              <Caret />
            </button>
            <span className="mr-1 ml-2 h-6 w-px bg-[#ddd]" />
            <button aria-label="捕捉点选项" className="pt-3">
              <Caret />
            </button>
          </div>
        </div>
      </div>
      <div className="z-10 col-start-1 row-start-1 min-h-0 w-[361px]">
        <SectionDialog />
      </div>
    </main>
  )
}

/* floating input method bar */

function ImeBar() {
  return (
    <div className="absolute bottom-1 left-[1155px] z-20 flex h-[26px] items-center border border-[#b9cbe4] bg-white pr-1.5 text-[16px] text-[#0a6fd8]">
      <svg width="34" height="34" viewBox="0 0 34 34" className="-ml-px -translate-y-px" aria-hidden="true">
        <path d="M4 8L26 3Q29 3 29 6L32 26Q32 28 29 29L10 32Q7 32 6 29L2 11Q2 8 4 8Z" fill="#f4511e" />
        <path d="M25 11C18 8 9 11 11 15C13 19 24 16 24 21C24 25 15 26 10 23" fill="none" stroke="#fff" strokeWidth="4" />
      </svg>
      <div className="flex items-center gap-1 *:flex *:w-5 *:justify-center">
        <button className="text-[15px] leading-5 font-bold">中</button>
        <button aria-label="标点">
          <Icon size={16} color="#0a6fd8" width={2}>
            <circle cx="5" cy="6" r="2" />
            <path d="M12.5 8V12L10 14" strokeWidth="3" />
          </Icon>
        </button>
        <button aria-label="语音输入">
          <FaMicrophone />
        </button>
        <button aria-label="软键盘">
          <FaKeyboard />
        </button>
        <button aria-label="皮肤" className="relative text-[#b782ee]">
          <FaTshirt />
          <span className="absolute -top-1 right-0 size-1.5 rounded-full bg-[#f4511e]" />
        </button>
        <button aria-label="游戏">
          <FaGamepad />
        </button>
        <button aria-label="工具箱">
          <FaThLarge size={14} />
        </button>
        <button aria-label="设置">
          <FaCog size={14} />
        </button>
      </div>
    </div>
  )
}

export default function App() {
  return (
    <div className="relative flex h-screen flex-col overflow-hidden bg-white font-['Open_Sans','Noto_Sans_CJK_SC',sans-serif]">
      <div className="shrink-0 bg-linear-to-r from-[#006289] to-[#047ba5]">
        <TitleBar />
        <MenuBar />
      </div>
      <div className="shrink-0">
        <Ribbon />
        <SelectionBar />
      </div>
      <div className="flex min-h-0 flex-1">
        <ResourceBar />
        <PartNavigator />
        <Workspace />
      </div>
      <footer className="flex h-[23px] shrink-0 items-center justify-between border-y border-[#aaa] pr-[53px] pl-[3px] text-[11px] leading-4 text-[#111]">
        <span className="font-medium">指定放置视图的位置</span>
        <button className="relative z-40 flex items-center gap-1.5">
          <Icon size={14}>
            <path d="M1 11.5H13M2 11L4 8V6C4 3 5 2 7 2C9 2 10 3 10 6V8L12 11M5.5 12C5.5 14 8.5 14 8.5 12M7 0V2" />
          </Icon>
          3 通知
        </button>
      </footer>
      <div className="h-[3px] shrink-0 bg-[#cdeef0]" />
      <ImeBar />
      <span className="pointer-events-none absolute right-1 bottom-3.5 z-30 font-['Noto_Sans_CJK_SC',sans-serif] text-[38px] leading-10 font-light whitespace-nowrap text-[#e2e2e2]/80 text-shadow-[1px_2px_1px_#00000060]">
        CSDN @山涧果子
      </span>
    </div>
  )
}
